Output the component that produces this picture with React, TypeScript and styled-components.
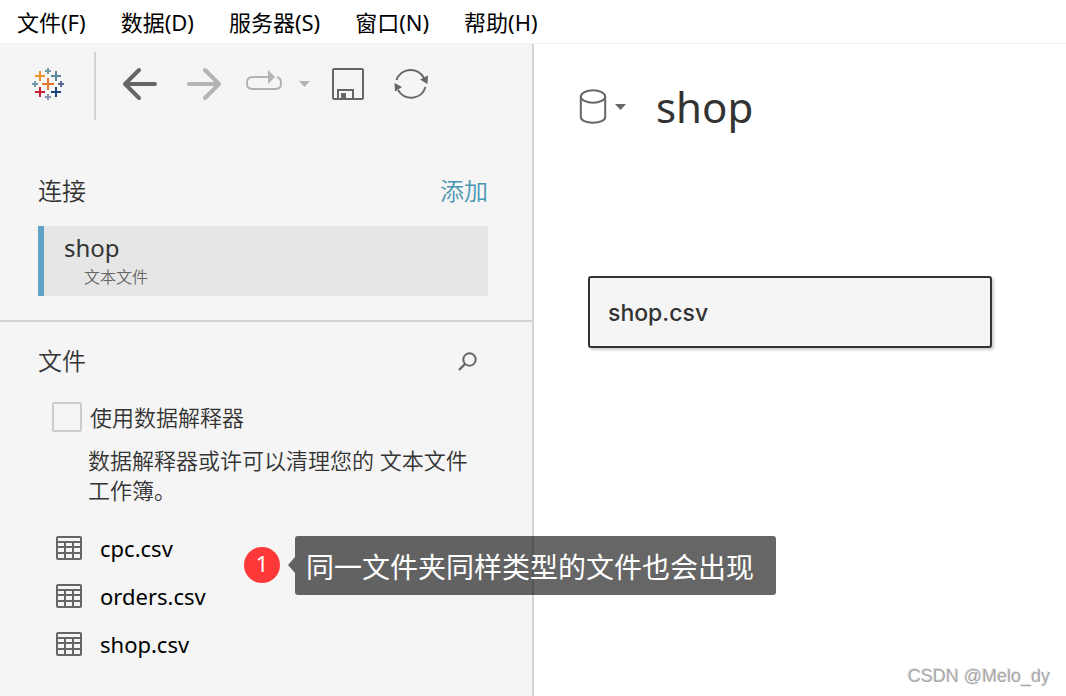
import React from "react";
import styled, { createGlobalStyle } from "styled-components";

const GlobalStyle = createGlobalStyle`
  *, *::before, *::after { box-sizing: border-box; }
  body {
    margin: 0;
    background: #ffffff;
    color: #333333;
    font-family: "Noto Sans", "Noto Sans CJK SC", sans-serif;
    font-size: 22px;
    line-height: 30px;
  }
  button, input { font: inherit; color: inherit; margin: 0; }
  svg { display: block; flex: none; }
`;

const Page = styled.div`
  position: relative;
  display: flex;
  flex-direction: column;
  min-height: 100vh;
`;

const MenuBar = styled.nav`
  display: flex;
  gap: 35px;
  height: 44px;
  padding: 0 17px;
  align-items: center;
  border-bottom: 1px solid #f0f0f0;
`;

const PlainButton = styled.button`
  display: flex;
  align-items: center;
  padding: 0;
  border: 0;
  background: none;
  cursor: pointer;
`;

const MenuButton = styled(PlainButton)`
  color: #000000;
  white-space: nowrap;
`;

const Workspace = styled.div`
  display: flex;
  flex: 1;
`;

const Sidebar = styled.aside`
  flex: 0 0 534px;
  border-right: 2px solid #d4d4d4;
  background: #f5f5f5;
`;

const Toolbar = styled.div`
  display: flex;
  align-items: center;
  height: 80px;
  padding-left: 32px;
`;

const Separator = styled.span`
  align-self: flex-end;
  width: 2px;
  height: 68px;
  margin: 0 27px 4px 30px;
  background: #d4d4d4;
`;

const ToolGroup = styled.div`
  display: flex;
  align-items: center;
  gap: 30px;
`;

const RedoGroup = styled.div`
  display: flex;
  align-items: center;
  gap: 17px;
  margin: 0 -8px 0 -5px;
`;

const Section = styled.section`
  padding: 0 44px 0 38px;
`;

const ConnectionSection = styled(Section)`
  padding-top: 50px;
  padding-bottom: 24px;
  border-bottom: 2px solid #d4d4d4;
`;

const FileSection = styled(Section)`
  padding-top: 22px;
  padding-bottom: 28px;
`;

const SectionHeader = styled.header`
  display: flex;
  align-items: center;
  justify-content: space-between;
  height: 34px;
`;

const SectionTitle = styled.h2`
  margin: 0;
  font-size: 24px;
  font-weight: 350;
`;

const AddLink = styled.a`
  color: #4996b2;
  font-size: 24px;
  font-weight: 350;
  text-decoration: none;
`;

const SearchButton = styled(PlainButton)`
  margin-right: 11px;
`;

const Connection = styled.button`
  display: flex;
  flex-direction: column;
  align-items: flex-start;
  width: 100%;
  height: 70px;
  margin-top: 18px;
  padding: 6px 20px;
  border: 0;
  border-left: 6px solid #5fa4c6;
  background: #e6e6e6;
  text-align: left;
`;

const ConnectionName = styled.span`
  font-size: 24px;
  line-height: 32px;
`;

const ConnectionType = styled.span`
  padding-left: 20px;
  color: #666666;
  font-size: 16px;
  font-weight: 350;
  line-height: 26px;
`;

const CheckLabel = styled.label`
  display: flex;
  align-items: center;
  gap: 8px;
  margin: 24px 0 0 14px;
  font-weight: 350;
`;

const Checkbox = styled.input`
  appearance: none;
  width: 30px;
  height: 30px;
  border: 2px solid #cccccc;
  border-radius: 2px;
  background: #f5f5f5;
  &:checked { background: #5fa4c6; }
`;

const Hint = styled.p`
  margin: 13px 0 19px;
  padding-left: 50px;
  font-weight: 350;
`;

const FileList = styled.ul`
  margin: 0;
  padding: 0 0 0 18px;
  list-style: none;
`;

const FileItem = styled.li`
  position: relative;
  display: flex;
  align-items: center;
  height: 48px;
`;

const FileButton = styled(PlainButton)`
  gap: 18px;
  color: #000000;
`;

const Callout = styled.div`
  position: absolute;
  left: 188px;
  top: 12px;
  z-index: 1;
  display: flex;
  align-items: center;
  height: 58px;
  color: #ffffff;
  white-space: nowrap;
`;

const Badge = styled.span`
  width: 36px;
  height: 36px;
  margin-right: 8px;
  border-radius: 50%;
  background: #fc3838;
  line-height: 32px;
  text-align: center;
`;

const CalloutArrow = styled.span`
  border: solid transparent;
  border-width: 8px 7px 8px 0;
  border-right-color: rgba(0, 0, 0, 0.6);
`;

const CalloutText = styled.span`
  align-self: flex-start;
  height: 59px;
  padding: 0 22px 0 11px;
  border-radius: 3px;
  background: rgba(0, 0, 0, 0.6);
  font-size: 28px;
  line-height: 62px;
`;

const Canvas = styled.main`
  flex: 1;
  min-width: 0;
  padding: 33px 45px;
`;

const SourceHeader = styled.header`
  display: flex;
  align-items: center;
  height: 60px;
`;

const SourceButton = styled(PlainButton)`
  gap: 8px;
  margin-right: 30px;
`;

const SourceName = styled.h1`
  margin: 0;
  font-size: 42px;
  font-weight: 400;
  line-height: 60px;
`;

const TableCard = styled.button`
  display: block;
  width: 100%;
  max-width: 404px;
  height: 72px;
  margin: 139px 0 0 9px;
  padding: 2px 18px 0;
  border: 2px solid #333333;
  border-radius: 3px;
  background: #f5f5f5;
  box-shadow: 2px 2px 3px rgba(0, 0, 0, 0.2);
  font-family: Inter, "Liberation Sans", sans-serif;
  font-size: 23px;
  font-weight: 500;
  text-align: left;
`;

const Watermark = styled.span`
  position: absolute;
  right: 16px;
  bottom: 8px;
  color: #a8a8a8;
  font-family: "Liberation Sans", sans-serif;
  font-size: 18px;
  line-height: 24px;
  text-shadow: 1px 1px 0 #ffffff, -1px -1px 0 #e4e4e4;
`;

const logoMarks: [number, number, number, string][] = [
  [16, 16, 6, "#e8762d"],
  [8, 8, 5, "#ee9326"],
  [24, 8, 5, "#5a879b"],
  [8, 24, 5, "#c92037"],
  [24, 24, 5, "#1f457e"],
  [16, 3, 3, "#7199a6"],
  [3, 16, 3, "#7199a6"],
  [29, 16, 3, "#5b6591"],
  [16, 29, 3, "#8491b4"],
];

const Logo = () => (
  <svg width="32" height="32" viewBox="0 0 32 32" aria-hidden="true">
    {logoMarks.map(([x, y, r, color]) => (
      <path key={`${x}-${y}`} d={`M${x - r} ${y}H${x + r}M${x} ${y - r}V${y + r}`} stroke={color} strokeWidth="2" />
    ))}
  </svg>
);

const Arrow = ({ forward }: { forward?: boolean }) => (
  <svg width="34" height="34" viewBox="0 0 34 34" fill="none" stroke={forward ? "#b3b3b3" : "#666666"} strokeWidth="4" strokeLinecap="round" strokeLinejoin="round" aria-hidden="true">
    <path d={forward ? "M2 17H31M18 3L32 17L18 31" : "M32 17H3M16 3L2 17L16 31"} />
  </svg>
);

const RedoIcon = () => (
  <svg width="36" height="34" viewBox="0 0 36 34" aria-hidden="true">
    <path d="M22 10H7C3 10 1 12 1 15V17C1 20 3 22 7 22H29C33 22 35 20 35 17V15C35 13 34 11 31 10" fill="none" stroke="#b3b3b3" strokeWidth="2" />
    <path d="M22 3L29 10L22 17Z" fill="#b3b3b3" />
  </svg>
);

const Caret = ({ color }: { color: string }) => (
  <svg width="11" height="6" viewBox="0 0 11 6" aria-hidden="true">
    <path d="M0 0H11L5.5 6Z" fill={color} />
  </svg>
);

const SaveIcon = () => (
  <svg width="32" height="32" viewBox="0 0 32 32" fill="none" stroke="#666666" strokeWidth="2" aria-hidden="true">
    <rect x="1" y="1" width="30" height="30" rx="1" />
    <path d="M6 31V22H21V31" />
    <rect x="9" y="25" width="5" height="5" fill="#666666" stroke="none" />
  </svg>
);

const RefreshIcon = () => (
  <svg width="34" height="34" viewBox="0 0 34 34" aria-hidden="true">
    <path d="M2.5 13A15 15 0 0 1 30 11M31.5 20A15 15 0 0 1 4 23" fill="none" stroke="#666666" strokeWidth="2" />
    <path d="M26 12.5L34 8.5L33.5 17ZM0.5 16L8 20L1 24.5Z" fill="#666666" />
  </svg>
);

const SearchIcon = () => (
  <svg width="19" height="19" viewBox="0 0 19 19" fill="none" stroke="#666666" strokeWidth="2" aria-hidden="true">
    <circle cx="11.5" cy="7.5" r="6.2" />
    <path d="M7 12L1 18" strokeWidth="2.4" />
  </svg>
);

const TableIcon = () => (
  <svg width="26" height="24" viewBox="0 0 26 24" fill="none" stroke="#666666" strokeWidth="2" aria-hidden="true">
    <rect x="1" y="1" width="24" height="22" rx="1" />
    <path d="M1 6H25M1 11H25M1 17H25M9 6V23M17 6V23" />
  </svg>
);

const DatabaseIcon = () => (
  <svg width="28" height="36" viewBox="0 0 28 36" fill="none" stroke="#666666" strokeWidth="2" aria-hidden="true">
    <ellipse cx="14" cy="7.5" rx="12.2" ry="6.3" />
    <path d="M1.8 7.5V28C1.8 31.5 7 33.8 14 33.8S26.2 31.5 26.2 28V7.5" />
  </svg>
);

const menus = ["文件(F)", "数据(D)", "服务器(S)", "窗口(N)", "帮助(H)"];
const files = ["cpc.csv", "orders.csv", "shop.csv"];

export default function App() {
  return (
    <Page>
      <GlobalStyle />
      <MenuBar>
        {menus.map((menu) => (
          <MenuButton key={menu}>{menu}</MenuButton>
        ))}
      </MenuBar>
      <Workspace>
        <Sidebar>
          <Toolbar>
            <Logo />
            <Separator />
            <ToolGroup>
              <PlainButton aria-label="后退"><Arrow /></PlainButton>
              <PlainButton aria-label="前进"><Arrow forward /></PlainButton>
              <RedoGroup>
                <PlainButton aria-label="重做"><RedoIcon /></PlainButton>
                <PlainButton aria-label="重做选项"><Caret color="#b3b3b3" /></PlainButton>
              </RedoGroup>
              <PlainButton aria-label="保存"><SaveIcon /></PlainButton>
              <PlainButton aria-label="刷新"><RefreshIcon /></PlainButton>
            </ToolGroup>
          </Toolbar>
          <ConnectionSection>
            <SectionHeader>
              <SectionTitle>连接</SectionTitle>
              <AddLink href="#add">添加</AddLink>
            </SectionHeader>
            <Connection>
              <ConnectionName>shop</ConnectionName>
              <ConnectionType>文本文件</ConnectionType>
            </Connection>
          </ConnectionSection>
          <FileSection>
            <SectionHeader>
              <SectionTitle>文件</SectionTitle>
              <SearchButton aria-label="搜索"><SearchIcon /></SearchButton>
            </SectionHeader>
            <CheckLabel>
              <Checkbox type="checkbox" />
              使用数据解释器
            </CheckLabel>
            <Hint>数据解释器或许可以清理您的 文本文件工作簿。</Hint>
            <FileList>
              {files.map((file, index) => (
                <FileItem key={file}>
                  <FileButton><TableIcon />{file}</FileButton>
                  {index === 0 && (
                    <Callout>
                      <Badge>1</Badge>
                      <CalloutArrow />
                      <CalloutText>同一文件夹同样类型的文件也会出现</CalloutText>
                    </Callout>
                  )}
                </FileItem>
              ))}
            </FileList>
          </FileSection>
        </Sidebar>
        <Canvas>
          <SourceHeader>
            <SourceButton aria-label="数据源"><DatabaseIcon /><Caret color="#666666" /></SourceButton>
            <SourceName>shop</SourceName>
          </SourceHeader>
          <TableCard>shop.csv</TableCard>
        </Canvas>
      </Workspace>
      <Watermark>CSDN @Melo_dy</Watermark>
    </Page>
  );
}
